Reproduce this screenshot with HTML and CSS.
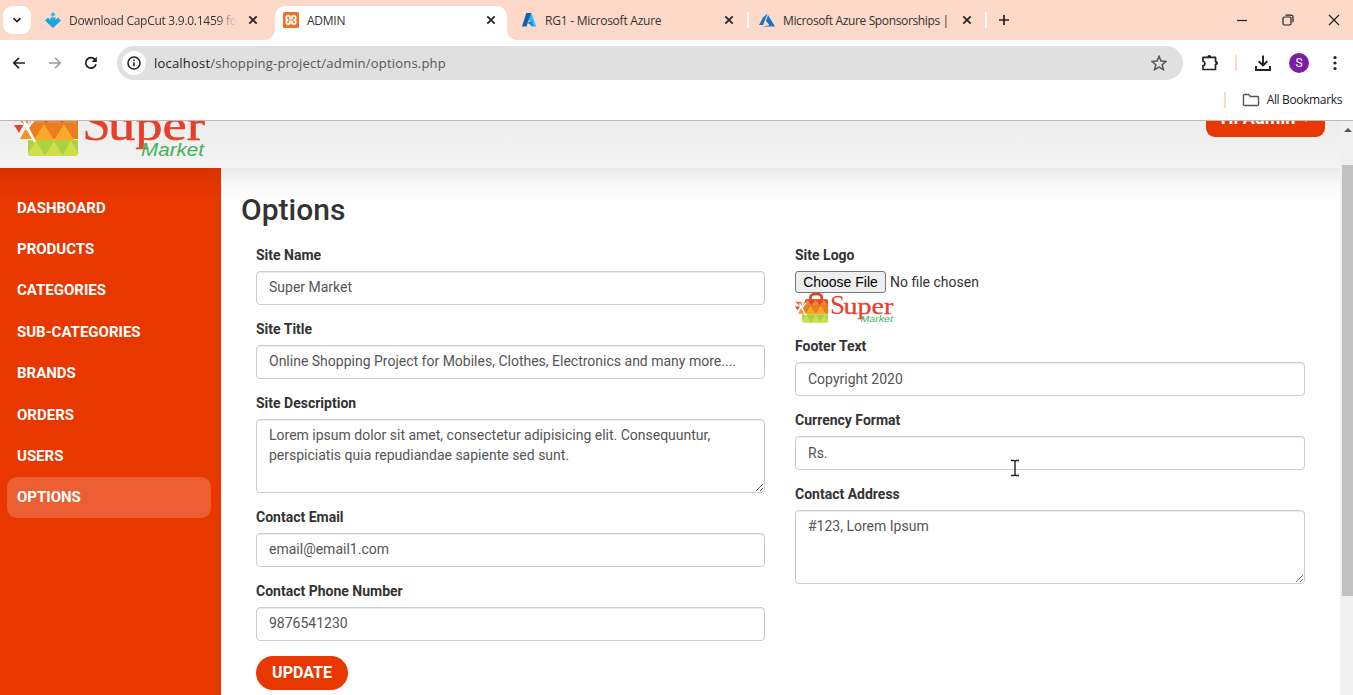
FILE: index.html
```html
<!DOCTYPE html>
<html lang="en">
<head>
<meta charset="utf-8">
<title>ADMIN</title>
<link rel="stylesheet" href="styles.css">
</head>
<body>
<svg class="defs" width="0" height="0">
  <symbol id="x" viewBox="0 0 10 10"><path d="M1.3 1.3 8.7 8.7M8.7 1.3 1.3 8.7" fill="none" stroke="#222" stroke-width="1.7"/></symbol>
  <symbol id="logo" viewBox="0 0 192 60">
    <path d="M30 14V9q0-7 11-7t11 7v5" fill="none" stroke="#e43d25" stroke-width="5"/>
    <path d="M21 12h39q4 0 4 4v24H18L14 26z" fill="#ec7c22"/>
    <path d="M21 12h39q4 0 4 4v8H17z" fill="#e4482a"/>
    <path d="M17 24l7-11 8 11 8-11 8 11 8-11 8 11z" fill="#f0892a"/>
    <path d="M20 41l10-16 10 16 10-16 10 16z" fill="#fbaa28"/>
    <path d="M14 41h50v13q0 3-4 3H18q-4 0-4-3z" fill="#aed141"/>
    <path d="M14 54l8-12 9 15H18q-4 0-4-3zM31 57l9-15 9 15zM48 57l9-15 7 12q0 3-4 3z" fill="#cde04a"/>
    <path d="M0 17l12 0 2 7-4 1z" fill="#ec6a28"/>
    <path d="M0 26h9.500l-4.500 8z" fill="#dd4b2a"/>
    <path d="M12 29l6 11H6z" fill="#f59425"/>
    <path d="M9 20l12 23M21 19l-9 12" stroke="#fff" stroke-width="2.600"/>
    <text x="68" y="41" class="logo-s">S</text>
    <text x="94" y="41" class="logo-uper" textLength="97" lengthAdjust="spacingAndGlyphs">uper</text>
    <text x="127" y="57" class="logo-market" textLength="63" lengthAdjust="spacingAndGlyphs">Market</text>
  </symbol>
</svg>

<div class="window">
  <div class="tabstrip">
    <div class="tab-search"><svg width="10" height="10" viewBox="0 0 10 10"><path d="M1.500 3.200 5 6.600 8.500 3.200" fill="none" stroke="#222" stroke-width="1.700"/></svg></div>
    <div class="tab tab-first">
      <svg class="fav" viewBox="0 0 16 16"><path d="M8 0l2.500 2.500L8 5 5.500 2.500z" fill="#3bb8e4"/><path d="M0 8.500 3 5.500 5.500 8V5.500h5V8L13 5.500l3 3L8 16z" fill="#14a8dc"/></svg>
      <span class="tab-title t1">Download CapCut 3.9.0.1459 fo</span>
      <svg class="close"><use href="#x"/></svg>
    </div>
    <div class="tab tab-active">
      <svg class="fav" viewBox="0 0 16 16"><rect width="16" height="16" rx="1.500" fill="#ec7324"/><path d="M5.200 3.700C2.800 3.700 2.600 7 4.600 8c-2 1-1.800 4.300.6 4.300 1.700 0 2-1.100 2-3h1.600c0 1.900.3 3 2 3 2.400 0 2.600-3.300.6-4.300 2-1 1.800-4.300-.6-4.300-1.700 0-2 1.100-2 3H7.200c0-1.900-.3-3-2-3z" fill="none" stroke="#fff" stroke-width="1.800"/></svg>
      <span class="tab-title t2">ADMIN</span>
      <svg class="close"><use href="#x"/></svg>
    </div>
    <div class="tab tab-azure">
      <svg class="fav" viewBox="0 0 16 16"><path d="M5.500 1h5L15 14.500h-5z" fill="#35b5ee"/><path d="M5.300 1H10L5.500 14.500H1z" fill="#1261ad"/><path d="M5 10h6l1.500 4.500z" fill="#1b83d8"/></svg>
      <span class="tab-title t3">RG1 - Microsoft Azure</span>
      <svg class="close"><use href="#x"/></svg>
    </div>
    <i class="sep"></i>
    <div class="tab tab-sponsor">
      <svg class="fav" viewBox="0 0 16 16"><path d="M8.500 1.500 4 5.500 0 13h4z" fill="#1673c8"/><path d="M9 3l7 11.500H3.500l7-1.200L7 9z" fill="#1673c8"/></svg>
      <span class="tab-title t4">Microsoft Azure Sponsorships |</span>
      <svg class="close"><use href="#x"/></svg>
    </div>
    <i class="sep"></i>
    <svg class="plus" width="12" height="12" viewBox="0 0 12 12"><path d="M6 1v10M1 6h10" stroke="#222" stroke-width="1.700"/></svg>
    <div class="win-buttons">
      <svg width="12" height="12" viewBox="0 0 12 12"><path d="M1 6.500h10" stroke="#222" stroke-width="1.200"/></svg>
      <svg width="12" height="12" viewBox="0 0 12 12" fill="none" stroke="#222" stroke-width="1.200"><rect x="1" y="3" width="8" height="8" rx="1.500"/><path d="M3.500 1.200H9q2 0 2 2v5"/></svg>
      <svg width="12" height="12" viewBox="0 0 12 12"><path d="M1 1l10 10M11 1 1 11" stroke="#222" stroke-width="1.200"/></svg>
    </div>
  </div>

  <div class="toolbar">
    <svg class="nav" viewBox="0 0 14 14"><path d="M13 7H2M7 1.800 1.800 7 7 12.200" fill="none" stroke="#222" stroke-width="1.700"/></svg>
    <svg class="nav" viewBox="0 0 14 14"><path d="M1 7h11M7 1.800 12.200 7 7 12.200" fill="none" stroke="#999" stroke-width="1.500"/></svg>
    <svg class="nav" viewBox="0 0 14 14"><path d="M12 8.200A5.200 5.200 0 1 1 11 3.600" fill="none" stroke="#222" stroke-width="1.700"/><path d="M12.800 .8v5.200H7.600z" fill="#222"/></svg>
    <div class="omnibox">
      <div class="info"><svg width="14" height="14" viewBox="0 0 14 14"><circle cx="7" cy="7" r="6" fill="none" stroke="#222" stroke-width="1.600"/><path d="M7 6.200v4M7 3.500v1.500" stroke="#222" stroke-width="1.600"/></svg></div>
      <span class="url">localhost<span>/shopping-project/admin/options.php</span></span>
      <svg class="star" width="16" height="16" viewBox="0 0 16 16"><path d="M8 1.300l2 4.700 5 .4-3.800 3.300 1.200 4.900L8 12l-4.400 2.600 1.200-4.900L1 6.400l5-.4z" fill="none" stroke="#555" stroke-width="1.500"/></svg>
    </div>
    <svg class="ext" width="18" height="18" viewBox="0 0 18 18"><path d="M2 3.300h12.500v4.200q1.600 0 1.600 1.500t-1.600 1.500v5H2v-3.800q2-.4 2-2.200T2 7.200z" fill="none" stroke="#222" stroke-width="1.700" stroke-linejoin="round"/><path d="M6.300 3.300a2 2.200 0 0 1 4 0zM14.500 7a2 2 0 0 1 0 4z" fill="#222"/></svg>
    <i class="tsep"></i>
    <svg class="dl" width="18" height="18" viewBox="0 0 18 18"><path d="M9 1.500v9.500M4.700 7.200 9 11.400l4.300-4.200M2 12v4h14v-4" fill="none" stroke="#222" stroke-width="1.900"/></svg>
    <div class="avatar">S</div>
    <svg class="dots" width="4" height="16" viewBox="0 0 4 16" fill="#222"><circle cx="2" cy="2.500" r="1.600"/><circle cx="2" cy="8" r="1.600"/><circle cx="2" cy="13.500" r="1.600"/></svg>
  </div>

  <div class="bookmarks">
    <i class="tsep"></i>
    <svg width="18" height="14" viewBox="0 0 18 14"><path d="M1.500 11.500v-9q0-1 1-1h4l2 2h7q1 0 1 1v7q0 1-1 1h-13q-1 0-1-1z" fill="none" stroke="#555" stroke-width="1.400"/></svg>
    <span class="bm-text">All Bookmarks</span>
  </div>

  <div class="viewport">
    <div class="page">
      <header class="header">
        <svg class="logo-big"><use href="#logo"/></svg>
        <div class="user-btn"><span>Hi Admin</span><i></i></div>
      </header>
      <div class="main">
        <nav class="sidebar">
          <a>DASHBOARD</a><a>PRODUCTS</a><a>CATEGORIES</a><a>SUB-CATEGORIES</a><a>BRANDS</a><a>ORDERS</a><a>USERS</a><a class="active">OPTIONS</a>
        </nav>
        <section class="content">
          <h2>Options</h2>
          <form class="form">
            <div class="col">
              <div class="group"><label>Site Name</label><input class="control" value="Super Market"></div>
              <div class="group"><label>Site Title</label><input class="control" value="Online Shopping Project for Mobiles, Clothes, Electronics and many more...."></div>
              <div class="group"><label>Site Description</label><textarea class="control area">Lorem ipsum dolor sit amet, consectetur adipisicing elit. Consequuntur, perspiciatis quia repudiandae sapiente sed sunt.</textarea></div>
              <div class="group"><label>Contact Email</label><input class="control" value="email@email1.com"></div>
              <div class="group"><label>Contact Phone Number</label><input class="control" value="9876541230"></div>
              <button class="update" type="button">UPDATE</button>
            </div>
            <div class="col">
              <div class="group logo-group"><label>Site Logo</label><div class="file"><span class="choose">Choose File</span><span class="nofile">No file chosen</span></div><svg class="logo-small"><use href="#logo"/></svg></div>
              <div class="group"><label>Footer Text</label><input class="control" value="Copyright 2020"></div>
              <div class="group"><label>Currency Format</label><input class="control" value="Rs."></div>
              <div class="group"><label>Contact Address</label><textarea class="control area">#123, Lorem Ipsum</textarea></div>
            </div>
          </form>
        </section>
      </div>
    </div>
    <div class="scrollbar"><i class="arrow"></i><div class="thumb"></div></div>
  </div>
  <svg class="cursor" width="10" height="18" viewBox="0 0 10 18"><path d="M1 1.500h3l1 1 1-1h3M5 2v14M1 16.500h3l1-1 1 1h3" fill="none" stroke="#222" stroke-width="1.400"/></svg>
</div>
</body>
</html>
```
FILE: styles.css
```css
* { box-sizing: border-box; }
body { margin: 0; overflow: hidden; background: #fff; font-family: Roboto, sans-serif; font-size: 14px; color: #333; }
svg { flex: none; display: block; }
i { display: block; flex: none; }
.defs { position: absolute; }
.window { width: 1353px; height: 695px; display: flex; flex-direction: column; overflow: hidden; }

/* tab strip */
.tabstrip { height: 40px; flex: none; display: flex; align-items: center; background: #fcd9c8; font-family: "Open Sans", sans-serif; font-size: 12px; color: #333; }
.tab-search { width: 28px; height: 28px; margin-left: 3px; border-radius: 9px; background: #fff; display: flex; align-items: center; justify-content: center; }
.tab { height: 34px; margin-top: 6px; padding-bottom: 6px; display: flex; align-items: center; }
.tab-first { width: 244px; padding-left: 14px; padding-right: 17px; }
.tab-active { width: 232px; padding-left: 8px; padding-right: 11px; background: #fff; border-radius: 10px 10px 0 0; position: relative; }
.tab-active::before, .tab-active::after { content: ""; position: absolute; bottom: 0; width: 10px; height: 10px; }
.tab-active::before { left: -10px; background: radial-gradient(circle at 0 0, transparent 9.500px, #fff 10px); }
.tab-active::after { right: -10px; background: radial-gradient(circle at 100% 0, transparent 9.500px, #fff 10px); }
.tab-azure { width: 236px; padding-left: 14px; padding-right: 9px; }
.tab-azure + .sep { margin-left: 4px; }
.tab-azure { margin-right: 0; }
.tab-sponsor { width: 236px; padding-left: 10px; padding-right: 13px; }
.fav { width: 16px; height: 16px; }
.close { width: 10px; height: 10px; margin-left: auto; }
.tab-title { margin-left: 8px; white-space: nowrap; letter-spacing: -.24px; }
.t1 { background: linear-gradient(90deg, #333 88%, #fcd9c8); background-clip: text; color: transparent; letter-spacing: -.28px; }
.t4 { letter-spacing: -.36px; }
.sep { width: 2px; height: 16px; background: #fff; }
.plus { margin-left: 11px; }
.win-buttons { margin-left: auto; margin-right: 13px; display: flex; gap: 34px; }

/* toolbar */
.toolbar { height: 46px; flex: none; display: flex; align-items: center; padding-left: 12px; }
.nav { width: 14px; height: 14px; margin-right: 22px; }
.omnibox { width: 1066px; height: 34px; margin-left: -3px; border-radius: 17px; background: #e0e0e0; display: flex; align-items: center; padding: 0 16px 0 5px; }
.info { width: 24px; height: 24px; border-radius: 50%; background: #fff; display: flex; align-items: center; justify-content: center; }
.url { margin-left: 8px; font-family: "Open Sans", sans-serif; font-size: 13px; letter-spacing: .2px; color: #222; white-space: nowrap; }
.url span { color: #555; }
.star { margin-left: auto; }
.ext { margin-left: 18px; }
.tsep { width: 2px; height: 16px; background: #fcd9c8; }
.toolbar .tsep { margin-left: 16px; }
.dl { margin-left: 17px; }
.avatar { width: 20px; height: 20px; margin-left: 17px; border-radius: 50%; background: #7b1fa2; color: #fff; font-size: 12px; line-height: 20px; text-align: center; }
.dots { margin-left: 24px; }
.bookmarks { height: 35px; flex: none; display: flex; align-items: center; justify-content: flex-end; padding: 0 11px 7px 0; border-bottom: 1px solid #b9b9b9; }
.bookmarks svg { margin-left: 16px; }
.bm-text { margin-left: 7px; font-family: "Open Sans", sans-serif; font-size: 12px; letter-spacing: -.36px; color: #222; }

/* page */
.viewport { flex: 1; display: flex; min-height: 0; }
.page { width: 1340px; display: flex; flex-direction: column; overflow: hidden; }
.header { height: 47px; flex: none; display: flex; justify-content: space-between; align-items: flex-end; padding: 0 15px 0 14px; overflow: hidden; background: linear-gradient(#ededed, #f4f4f4); }
.logo-big { width: 192px; height: 60px; margin-bottom: 9px; }
.logo-s { font: 52px "Liberation Serif", serif; fill: #e5402a; }
.logo-uper { font: 44px "Liberation Serif", serif; fill: #e5402a; stroke: #e5402a; stroke-width: .5px; }
.logo-market { font: italic 19px "Liberation Sans", sans-serif; fill: #3fb457; }
.user-btn { width: 119px; height: 36px; margin-bottom: 31px; padding-bottom: 3px; border-radius: 9px; background: #e93700; color: #fff; font-weight: 700; font-size: 18px; display: flex; align-items: center; justify-content: center; gap: 7px; }
.user-btn i { margin-top: 5px; border: 4px solid transparent; border-top-color: #fff; border-bottom: 0; }
.main { flex: 1; display: flex; position: relative; }
.main::before { content: ""; position: absolute; left: 0; right: 0; top: 0; height: 34px; background: linear-gradient(rgba(0,0,0,.085), rgba(0,0,0,.025) 50%, transparent); }
.sidebar { width: 221px; padding: 19px 10px 0 7px; background: #e93700; }
.sidebar a { display: flex; align-items: center; height: 41.4px; padding-left: 10px; border-radius: 10px; color: #fff; font-weight: 700; font-size: 15px; }
.sidebar .active { background: #ed5f33; }
.content { flex: 1; padding: 25px 36px 0 20px; }
h2 { margin: 0 0 19px; font-size: 30px; line-height: 33px; font-weight: 500; color: #333; }
.form { display: flex; gap: 30px; padding-left: 15px; }
.col { flex: 1; }
.col + .col { flex: none; width: 510px; margin-right: -1px; }
.group { margin-bottom: 14px; }
label { display: block; line-height: 20px; margin-bottom: 6px; font-weight: 700; }
.control { display: block; width: 100%; height: 34px; padding: 5px 12px 7px; border: 1px solid #ccc; border-radius: 4px; box-shadow: inset 0 1px 1px rgba(0,0,0,.075); background: #fff; font: 14px/20px Roboto, sans-serif; color: #555; }
.area { height: 74px; overflow: hidden; }
.col + .col input.control { padding: 6px 12px; }
.update { display: block; width: 92px; height: 34px; margin-top: 15px; padding: 0 0 1px; border: 0; border-radius: 17px; background: #e93700; color: #fff; font: 700 16px Roboto, sans-serif; }
.file { display: flex; align-items: center; height: 22px; }
.choose { width: 91px; height: 22px; border: 1px solid #767676; border-radius: 3px; background: #efefef; color: #000; font: 14px/20px "Liberation Sans", sans-serif; text-align: center; }
.nofile { margin-left: 4px; }
.logo-small { width: 99px; height: 31px; }
.logo-group { margin-bottom: 12px; }
.scrollbar { width: 13px; background: #f0f0f0; padding: 7px 0 0 2px; }
.arrow { width: 8px; margin-left: 2px; border: 4px solid transparent; border-bottom: 4px solid #555; border-top: 0; }
.thumb { height: 431px; margin-top: 33px; background: #c1c1c1; }
.cursor { position: absolute; left: 1010px; top: 459px; }
```
